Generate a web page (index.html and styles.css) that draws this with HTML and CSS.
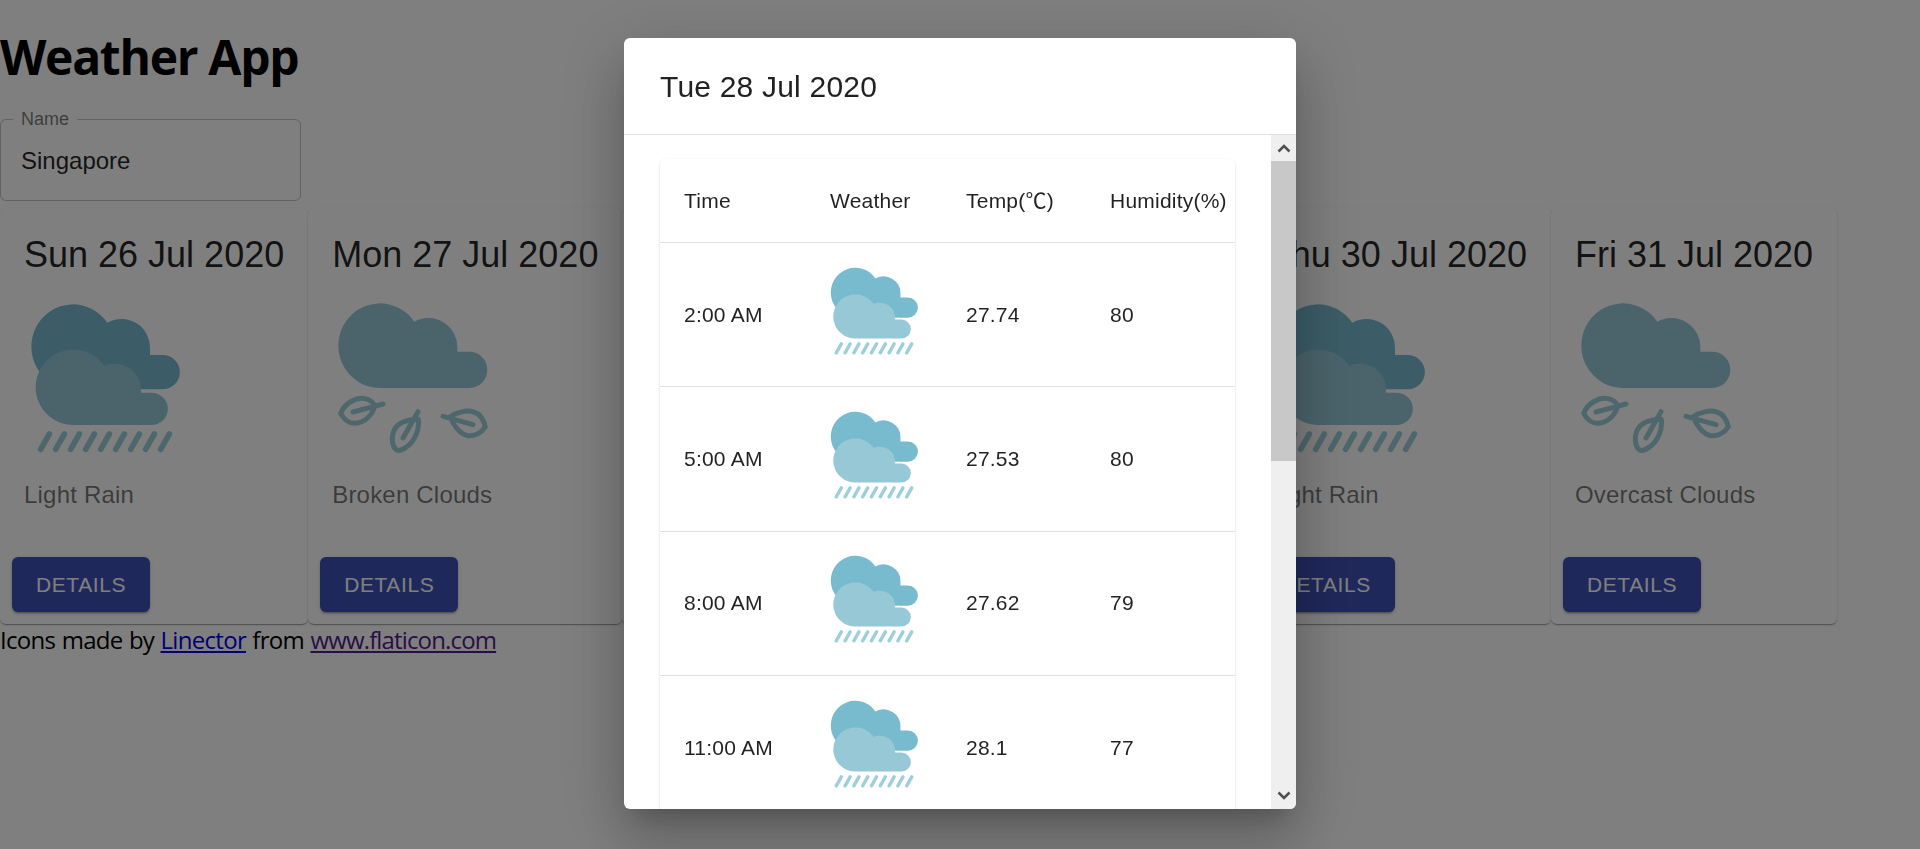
FILE: index.html
```html
<!DOCTYPE html>
<html lang="en">
<head>
<meta charset="utf-8">
<title>Weather App</title>
<link rel="stylesheet" href="styles.css">
</head>
<body>
<svg class="sprites" aria-hidden="true">
  <symbol id="rain" viewBox="60 39 450 450">
    <path class="back" d="M186 297 A125 127 0 1 1 292 98 A86 86 0 0 1 420 178 L420 195 L458 195 A51.5 51.5 0 0 1 458 298 Z"/>
    <path class="front" d="M187 405 A113 113 0 1 1 283 228 A78 78 0 0 1 393 295 L393 308 L425 308 A48.500 48.500 0 0 1 425 405 Z"/>
    <path class="drops" d="M92 478L118 432M137 478L163 432M182 478L208 432M227 478L253 432M272 478L298 432M317 478L343 432M362 478L388 432M407 478L433 432M452 478L478 432"/>
  </symbol>
  <symbol id="leaves" viewBox="55 40 450 450">
    <path class="front" d="M180 295 A125 127 0 1 1 284 96 A87 87 0 0 1 413 176 L413 186 L449 186 A54 54.5 0 0 1 449 295 Z"/>
    <path class="leaf" d="M63 371C75 340 110 322 135 327C150 330 160 338 165 347C160 375 135 400 105 401C88 401 72 388 63 371ZM100 367L190 343M233 482C218 475 214 445 222 425C230 405 255 390 296 389C300 420 285 455 260 472C250 480 240 483 233 482ZM250 445L295 366M392 381C410 368 440 360 462 367C480 372 492 392 497 411C485 430 465 440 445 438C420 434 400 405 392 381ZM370 380L460 405"/>
  </symbol>
</svg>

<h1 class="app-title">Weather App</h1>

<fieldset class="name-field">
  <legend class="name-label">Name</legend>
  <input class="name-input" type="text" value="Singapore" aria-label="Name">
</fieldset>

<main class="cards">
  <article class="card">
    <h2 class="card-date">Sun 26 Jul 2020</h2>
    <svg class="card-icon"><use href="#rain"/></svg>
    <p class="card-desc">Light Rain</p>
    <button class="details-btn">Details</button>
  </article>
  <article class="card">
    <h2 class="card-date">Mon 27 Jul 2020</h2>
    <svg class="card-icon"><use href="#leaves"/></svg>
    <p class="card-desc">Broken Clouds</p>
    <button class="details-btn">Details</button>
  </article>
  <article class="card">
    <h2 class="card-date">Tue 28 Jul 2020</h2>
    <svg class="card-icon"><use href="#rain"/></svg>
    <p class="card-desc">Light Rain</p>
    <button class="details-btn">Details</button>
  </article>
  <article class="card">
    <h2 class="card-date">Wed 29 Jul 2020</h2>
    <svg class="card-icon"><use href="#rain"/></svg>
    <p class="card-desc">Light Rain</p>
    <button class="details-btn">Details</button>
  </article>
  <article class="card">
    <h2 class="card-date">Thu 30 Jul 2020</h2>
    <svg class="card-icon"><use href="#rain"/></svg>
    <p class="card-desc">Light Rain</p>
    <button class="details-btn">Details</button>
  </article>
  <article class="card">
    <h2 class="card-date">Fri 31 Jul 2020</h2>
    <svg class="card-icon"><use href="#leaves"/></svg>
    <p class="card-desc">Overcast Clouds</p>
    <button class="details-btn">Details</button>
  </article>
</main>

<p class="credit">Icons made by <a class="link" href="#">Linector</a> from <a class="link visited" href="#">www.flaticon.com</a></p>

<div class="backdrop">
  <section class="dialog" role="dialog" aria-label="Tue 28 Jul 2020">
    <header class="dialog-title">Tue 28 Jul 2020</header>
    <div class="dialog-main">
      <div class="dialog-body">
        <div class="table-paper">
          <table class="forecast">
            <colgroup>
              <col class="col-time"><col class="col-weather"><col class="col-temp"><col class="col-hum">
            </colgroup>
            <thead>
              <tr class="head-row"><th>Time</th><th>Weather</th><th>Temp(℃)</th><th>Humidity(%)</th></tr>
            </thead>
            <tbody>
              <tr><td>2:00 AM</td><td><svg class="row-icon"><use href="#rain"/></svg></td><td>27.74</td><td>80</td></tr>
              <tr><td>5:00 AM</td><td><svg class="row-icon"><use href="#rain"/></svg></td><td>27.53</td><td>80</td></tr>
              <tr><td>8:00 AM</td><td><svg class="row-icon"><use href="#rain"/></svg></td><td>27.62</td><td>79</td></tr>
              <tr><td>11:00 AM</td><td><svg class="row-icon"><use href="#rain"/></svg></td><td>28.1</td><td>77</td></tr>
            </tbody>
          </table>
        </div>
      </div>
      <div class="scrollbar" aria-hidden="true">
        <div class="scroll-btn">
          <svg class="scroll-arrow" viewBox="0 0 14 10"><path d="M1.500 8.500L7 3l5.500 5.500"/></svg>
        </div>
        <div class="scroll-track"><div class="scroll-thumb"></div></div>
        <div class="scroll-btn">
          <svg class="scroll-arrow" viewBox="0 0 14 10"><path d="M1.500 1.500L7 7l5.500-5.500"/></svg>
        </div>
      </div>
    </div>
  </section>
</div>
</body>
</html>
```

FILE: styles.css
```css
* { box-sizing: border-box; }

html, body { height: 100%; }

body {
  margin: 0;
  overflow: hidden;
  background: #fff;
  color: #000;
  font-family: "Open Sans", "Noto Sans", sans-serif;
}

.sprites { position: absolute; width: 0; height: 0; }

.back { fill: #78bace; }
.front { fill: #96c8d6; }
.drops { fill: none; stroke: #9ccfdb; stroke-width: 17; stroke-linecap: round; }
.leaf { fill: none; stroke: #9ccfdb; stroke-width: 15; stroke-linecap: round; stroke-linejoin: round; }

.app-title {
  margin: 25px 0 20px;
  font-size: 48px;
  line-height: 64px;
  font-weight: 700;
  letter-spacing: -1.3px;
}

.name-field {
  display: block;
  width: 301px;
  height: 92px;
  margin: 0 0 7px;
  padding: 0 20px;
  border: 1px solid rgba(0, 0, 0, .23);
  border-radius: 6px;
  min-width: 0;
}

.name-label {
  margin-left: -8px;
  padding: 0 8px;
  font: 18px/20px "Liberation Sans", Arial, sans-serif;
  color: rgba(0, 0, 0, .54);
}

.name-input {
  display: block;
  width: 100%;
  height: 40px;
  margin-top: 12px;
  padding: 0;
  border: 0;
  outline: 0;
  background: transparent;
  font: 24px "Liberation Sans", Arial, sans-serif;
  color: rgba(0, 0, 0, .87);
}

.cards {
  display: flex;
  align-items: stretch;
  font-family: "Liberation Sans", Arial, sans-serif;
}

.card {
  display: flex;
  flex-direction: column;
  align-items: flex-start;
  flex: none;
  padding-top: 24px;
  border-radius: 6px;
  background: #fff;
  box-shadow: 0 2px 1px -1px rgba(0,0,0,.2), 0 1px 1px 0 rgba(0,0,0,.14), 0 1px 3px 0 rgba(0,0,0,.12);
}

.card-date {
  margin: 0 24px;
  font-size: 36px;
  line-height: 46px;
  font-weight: 400;
  white-space: nowrap;
  color: rgba(0, 0, 0, .87);
}

.card-icon {
  display: block;
  width: 150px;
  height: 150px;
  margin: 25px 0 0 30px;
}

.card-desc {
  margin: 24px 24px 44px;
  font-size: 24px;
  line-height: 36px;
  letter-spacing: .2px;
  color: rgba(0, 0, 0, .54);
}

.details-btn {
  width: 138px;
  height: 55px;
  margin: 0 0 12px 12px;
  padding: 0;
  border: 0;
  border-radius: 6px;
  background: #3f51b5;
  color: #fff;
  font: 21px "Liberation Sans", Arial, sans-serif;
  letter-spacing: .6px;
  text-transform: uppercase;
  box-shadow: 0 3px 1px -2px rgba(0,0,0,.2), 0 2px 2px 0 rgba(0,0,0,.14), 0 1px 5px 0 rgba(0,0,0,.12);
}

.credit {
  margin: 0;
  font-size: 24px;
  line-height: 32px;
  letter-spacing: -.7px;
  word-spacing: .8px;
}

.link { color: #00e; }
.visited { color: #551a8b; letter-spacing: -.85px; }

.backdrop {
  position: fixed;
  inset: 0;
  display: flex;
  align-items: flex-start;
  justify-content: center;
  padding-top: 38px;
  background: rgba(0, 0, 0, .5);
}

.dialog {
  display: flex;
  flex-direction: column;
  width: 672px;
  height: 771px;
  overflow: hidden;
  border-radius: 6px;
  background: #fff;
  color: rgba(0, 0, 0, .87);
  font-family: "Liberation Sans", "Noto Sans CJK SC", Arial, sans-serif;
  box-shadow: 0 16px 22px -10px rgba(0,0,0,.2), 0 36px 56px 5px rgba(0,0,0,.14), 0 14px 68px 12px rgba(0,0,0,.12);
}

.dialog-title {
  flex: none;
  height: 97px;
  padding: 25px 36px 0;
  border-bottom: 1px solid #e0e0e0;
  font-size: 30px;
  line-height: 48px;
  letter-spacing: .2px;
}

.dialog-main {
  flex: 1;
  min-height: 0;
  display: flex;
}

.dialog-body {
  flex: 1;
  min-width: 0;
  overflow: hidden;
  padding: 24px 36px 0;
}

.scrollbar {
  flex: none;
  width: 25px;
  display: flex;
  flex-direction: column;
  background: #efefef;
}

.scroll-btn {
  flex: none;
  height: 26px;
  display: flex;
  align-items: center;
  justify-content: center;
}

.scroll-arrow {
  width: 14px;
  height: 10px;
  fill: none;
  stroke: #505050;
  stroke-width: 2.5;
}

.scroll-track { flex: 1; }

.scroll-thumb {
  height: 300px;
  background: #c8c8c8;
}

.table-paper {
  border-radius: 6px;
  background: #fff;
  box-shadow: 0 2px 1px -1px rgba(0,0,0,.2), 0 1px 1px 0 rgba(0,0,0,.14), 0 1px 3px 0 rgba(0,0,0,.12);
}

.forecast {
  width: 100%;
  table-layout: fixed;
  border-collapse: collapse;
  font-size: 21px;
  letter-spacing: .225px;
}

.col-time { width: 146px; }
.col-weather { width: 136px; }
.col-temp { width: 144px; }
.col-hum { width: 149px; }

.forecast th,
.forecast td {
  padding: 24px 0 24px 24px;
  border-bottom: 1px solid #e0e0e0;
  font-weight: 400;
  text-align: left;
  line-height: 36px;
  white-space: nowrap;
  vertical-align: middle;
}

.forecast th {
  padding-top: 25px;
  line-height: 34px;
}

.forecast tbody tr { height: 144.4px; }

.row-icon {
  display: block;
  width: 88px;
  height: 88px;
  margin: -1px 0 7px;
}
```
